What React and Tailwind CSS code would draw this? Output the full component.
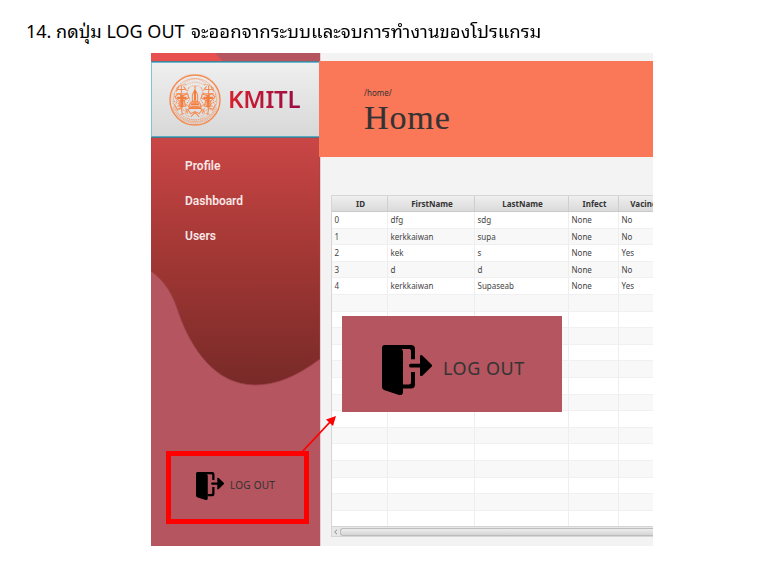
import React from "react";

const columns = [
  { key: "id", label: "ID", width: "w-[56px]" },
  { key: "first", label: "FirstName", width: "w-[87px]" },
  { key: "last", label: "LastName", width: "w-[94px]" },
  { key: "infect", label: "Infect", width: "w-[50px]" },
  { key: "vacine", label: "Vacine", width: "w-[48px]" },
];

const people = [
  { id: "0", first: "dfg", last: "sdg", infect: "None", vacine: "No" },
  { id: "1", first: "kerkkaiwan", last: "supa", infect: "None", vacine: "No" },
  { id: "2", first: "kek", last: "s", infect: "None", vacine: "Yes" },
  { id: "3", first: "d", last: "d", infect: "None", vacine: "No" },
  { id: "4", first: "kerkkaiwan", last: "Supaseab", infect: "None", vacine: "Yes" },
];

const rows = Array.from({ length: 19 }, (_, i) => people[i] || {});

function LogoutIcon({ className }) {
  return (
    <svg viewBox="0 0 50 50" className={className} aria-hidden="true">
      <path d="M2.5 0H29Q33 0 33 4V14.2H29V6Q29 4 27 4H19.5Q21 5.2 21 7V47Q21 50.8 17 50L2 45Q0 44 0 42V3Q0 0 2.5 0Z" />
      <path d="M29 27H33V39.5Q33 43.5 29 43.5H20.5V39.5H27Q29 39.5 29 37.5Z" />
      <path d="M28.5 18.8H38V10.8Q39 9.4 40.6 10.7L49.5 19.4Q50.6 20.6 49.5 21.8L40.6 30.5Q39 31.8 38 30.2V22.6H28.5Q27 22.4 27 20.7T28.5 18.8Z" />
    </svg>
  );
}

function Guardian() {
  return (
    <g>
      <path d="M13 12v9M9.500 16h7M8 20h10M11 13l-3 5M15 13l3 4" />
      <path d="M7 23l3-3 4 2 5-2 1 4-4 2-5 1zM11 27h5l1 5h-6zM14 33l-5 2-2-4M13 34l1 6M17 34l2 5" />
      <path d="M12 21h3v12h-3zM9 23h9v2H9z" fill="#f47c3c" stroke="none" />
      <path
        d="M6 20l3 8-3 3M20 14l-2 6 3 5-3 5 3 4M9 36l4-2 4 3 3-1M12 40l6-2M8 15l4-3 6-1M6 27l5 3M9 32l7-2 4 2"
        strokeWidth=".9"
        strokeDasharray="1.6 .6"
        opacity=".85"
      />
    </g>
  );
}

function Seal() {
  return (
    <svg viewBox="0 0 52 52" className="size-[52px] shrink-0" fill="none" stroke="#f58a50" aria-hidden="true">
      <circle cx="26" cy="26" r="25" strokeWidth="1.4" />
      <circle cx="26" cy="26" r="21.6" strokeWidth="0.7" opacity=".7" />
      <path d="M4 33A23.200 23.200 0 0 0 48 33" strokeWidth="1.8" strokeDasharray="1 0.8" opacity=".55" />
      <path d="M4 30A23.200 23.200 0 1 1 48 30" strokeWidth="1" strokeDasharray="1 1.200" opacity=".4" />
      <g strokeWidth="1" transform="translate(-1.3 -1.3) scale(1.05)">
        <Guardian />
        <g transform="translate(52 0) scale(-1 1)">
          <Guardian />
        </g>
        <path d="M26 12v18M23.500 21l2.500-5 2.500 5v6h-5zM22 28h8l2 4H20zM19 35l7-3 7 3-3 4-4-2-4 2zM22 42l4-4 4 4" />
        <path d="M25 17h2v9h-2zM22 29h8v2h-8zM20 33h12v1.500H20z" fill="#f47c3c" stroke="none" />
        <path
          d="M15 11q5-5 11-5t11 5M17 12q9-6 18 0M20 15l3-3 3 2 3-2 3 3M14 41q12 8 24 0M17 40l4 2M35 40l-4 2M18 43q8 4 16 0"
          strokeWidth=".8"
          strokeDasharray="1.5 .7"
          opacity=".65"
        />
      </g>
    </svg>
  );
}

function Sidebar() {
  return (
    <aside className="relative flex w-[169px] shrink-0 flex-col bg-[#b4555f]">
      <svg className="absolute inset-0" width="169" height="493" viewBox="0 0 169 493" aria-hidden="true">
        <defs>
          <linearGradient id="wave" x1="0" y1="84" x2="0" y2="332" gradientUnits="userSpaceOnUse">
            <stop offset="0" stopColor="#ca4646" />
            <stop offset="0.45" stopColor="#a43835" />
            <stop offset="1" stopColor="#782a28" />
          </linearGradient>
        </defs>
        <path d="M0 0H64Q68 5 74 10H0Z" fill="#e84f4f" />
        <path
          d="M0 84H169V306C146 323 126 332 104 332C64 332 40 295 28 261C22 242 15 229 0 218Z"
          fill="url(#wave)"
          stroke="#9c4149"
          strokeWidth="0.8"
        />
      </svg>
      <div className="relative mt-[9px] flex h-[75px] w-[169px] items-center border border-[#7cc4d8] border-b-[#5aabc4] border-t-[#6db9d0] bg-linear-to-b from-[#efefef] to-[#d8d8d8] pl-[17px] shadow-[0_-1px_0_#4a7f96,0_1px_0_#4a7688]">
        <Seal />
        <span className="mb-[2px] ml-[7px] bg-linear-to-r from-[#d8202b] to-[#970b42] bg-clip-text font-['Noto_Sans','Open_Sans',sans-serif] text-[24px] leading-[30px] font-semibold tracking-[-0.2px] text-transparent">
          KMITL
        </span>
      </div>
      <nav className="relative mt-[12px] flex flex-col pl-[34px] font-['Roboto',Arial,sans-serif] text-[12px] leading-[35px] font-semibold text-[#f9e7e7]">
        <a>Profile</a>
        <a>Dashboard</a>
        <a>Users</a>
      </nav>
      <div className="relative mt-auto mb-[22px] ml-[15px] flex h-[73px] w-[143px] items-center border-[5px] border-[#ff0000] pb-[4px] pl-[25px]">
        <LogoutIcon className="size-[28px] shrink-0" />
        <span className="mb-[1px] ml-[6px] font-['Noto_Sans',sans-serif] text-[10px] leading-4 tracking-[0.25px] whitespace-nowrap text-[#333]">
          LOG OUT
        </span>
      </div>
    </aside>
  );
}

function PeopleTable() {
  return (
    <div className="mt-[38px] ml-[10px] flex h-[342px] flex-col overflow-hidden border border-r-0 border-[#d6d6d6] bg-white font-['Noto_Sans',sans-serif] text-[8px] text-[#444]">
      <div className="flex h-[16px] shrink-0 border-b border-[#cacaca] bg-linear-to-b from-[#efefef] to-[#dadada]">
        {columns.map((c) => (
          <div
            key={c.key}
            className={`${c.width} shrink-0 border-r border-[#cfcfcf] pl-[2px] text-center leading-[15px] font-bold text-[#333]`}
          >
            {c.label}
          </div>
        ))}
      </div>
      <div className="min-h-0 flex-1 overflow-hidden">
        {rows.map((row, i) => (
          <div key={i} className="flex h-[16.6px] border-b border-[#f0f0f0] odd:bg-white even:bg-[#f8f8f8]">
            {columns.map((c) => (
              <div key={c.key} className={`${c.width} shrink-0 border-r border-[#eeeeee] pl-[2.500px] leading-[15px]`}>
                {row[c.key]}
              </div>
            ))}
          </div>
        ))}
      </div>
      <div className="flex h-[10px] shrink-0 items-center border-t border-[#d4d4d4] bg-[#e7e7e7]">
        <svg className="ml-[1px] size-[6px]" viewBox="0 0 6 6" fill="none" stroke="#8c8c8c" aria-hidden="true">
          <path d="M4 .8L1.7 3L4 5.2" />
        </svg>
        <div className="ml-[1px] h-[8px] flex-1 rounded-l-[3px] border border-r-0 border-[#bcbcbc] bg-linear-to-b from-[#ededed] to-[#d5d5d5]" />
      </div>
    </div>
  );
}

export default function App() {
  return (
    <div className="h-[572px] w-[767px] overflow-hidden bg-white">
      <h1 className="flex h-[53px] items-center pt-[8px] pl-[26px] font-['TH_Sarabun_New','Noto_Sans','Noto_Sans_Thai_Looped','Loma','Noto_Sans_Thai',sans-serif] text-[18px] leading-6 whitespace-pre text-black">
        <span>14. กดปุ่ม LOG OUT </span>
        <span className="ml-[2px] origin-left scale-x-[1.033]">จะออกจากระบบและจบการทำงานของโปรแกรม</span>
      </h1>
      <div className="relative ml-[151px] flex h-[493px] w-[502px]">
        <Sidebar />
        <main className="min-w-0 flex-1 border-l border-[#e9cdcf] bg-[#f3f3f3]">
          <header className="relative -ml-[2px] mt-2 h-[96px] bg-[#fa7758] pt-[25px] pl-[45px] text-[#333]">
            <p className="font-['Noto_Sans',sans-serif] text-[8px] leading-[13px]">/home/</p>
            <h2 className="font-['Liberation_Serif',serif] text-[34px] leading-[38px] tracking-[0.9px] [-webkit-text-stroke:0.15px_#333]">
              Home
            </h2>
          </header>
          <PeopleTable />
        </main>
        <div className="absolute top-[263px] left-[191px] flex h-[96px] w-[220px] items-center bg-[#b4555f] pt-[12px] pl-[40px]">
          <LogoutIcon className="size-[50px] shrink-0" />
          <span className="mb-[4px] ml-[11px] font-['Noto_Sans',sans-serif] text-[18px] leading-6 tracking-[0.5px] whitespace-nowrap text-[#333]">
            LOG OUT
          </span>
        </div>
        <svg className="absolute top-[360px] left-[148px]" width="40" height="42" viewBox="0 0 40 42" aria-hidden="true">
          <path d="M3 39L32 8" stroke="#ff0000" strokeWidth="1.8" />
          <path d="M37 3L34 13L27 6.500Z" fill="#ff0000" />
        </svg>
      </div>
    </div>
  );
}
